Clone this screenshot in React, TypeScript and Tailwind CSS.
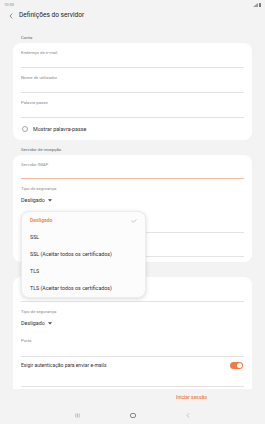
import React from 'react';

function Label({ children }: { children?: React.ReactNode }) {
  return <div className="h-[6px] leading-[6px] text-[4.3px] text-[#8a8a8a]">{children}</div>;
}

function Field({ label, accent = false, pt = 'pt-[7px]', gap = 'h-[11px]' }: { label?: string; accent?: boolean; pt?: string; gap?: string }) {
  return (
    <div className={`${pt} border-b ${accent ? 'border-[#f5b9a0]' : 'border-[#e3e3e3]'}`}>
      <Label>{label}</Label>
      <div className={gap} />
    </div>
  );
}

function Caret() {
  return (
    <svg width="4" height="3" viewBox="0 0 4 3" className="ml-[3px]">
      <path d="M0 0.3 L4 0.3 L2 2.6 Z" fill="#444" />
    </svg>
  );
}

function SecurityType({ pt = 'pt-[7px]' }: { pt?: string }) {
  return (
    <div className={pt}>
      <Label>Tipo de segurança</Label>
      <div className="mt-[4px] flex h-[8px] items-center text-[5.4px] text-[#333]">
        Desligado
        <Caret />
      </div>
    </div>
  );
}

function SectionTitle({ children, mt }: { children?: React.ReactNode; mt: string }) {
  return (
    <div className={`${mt} mb-[2px] h-[6px] px-[21px] leading-[6px] text-[4.3px] text-[#666]`}>{children}</div>
  );
}

const options = ['SSL', 'SSL (Aceitar todos os certificados)', 'TLS', 'TLS (Aceitar todos os certificados)'];

export default function App() {
  return (
    <div className="relative flex h-[424px] w-[265px] flex-col overflow-hidden bg-[#f3f3f3] font-['Roboto',sans-serif]">
      {/* status bar */}
      <div className="flex h-[9px] items-center justify-between px-[4px] text-[4px] text-[#8a8a8a]">
        <span>10:00</span>
        <div className="flex items-center gap-[1px]">
          <svg width="5" height="4" viewBox="0 0 5 4">
            <path d="M0 4 L5 0 L5 4 Z" fill="#9a9a9a" />
          </svg>
          <div className="h-[4px] w-[2.5px] rounded-[0.5px] bg-[#777]" />
        </div>
      </div>

      {/* header */}
      <div className="flex h-[14px] items-center pl-[9px] text-[6.6px] text-[#222]">
        <svg width="4" height="6" viewBox="0 0 4 6" className="mr-[6px]">
          <path d="M3.2 0.6 L0.9 3 L3.2 5.4" fill="none" stroke="#444" strokeWidth="0.6" />
        </svg>
        Definições do servidor
      </div>

      <div className="flex-1 overflow-hidden">
        <SectionTitle mt="mt-[12px]">Conta</SectionTitle>
        <div className="mx-[13px] rounded-[8px] bg-white px-[8px]">
          <Field label="Endereço de e-mail" />
          <Field label="Nome de utilizador" />
          <Field label="Palavra-passe" />
          <div className="flex h-[22px] items-center">
            <div className="ml-[1px] mr-[5px] h-[6px] w-[6px] rounded-full border-[0.6px] border-[#a8a8a8]" />
            <span className="text-[5.4px] text-[#333]">Mostrar palavra-passe</span>
          </div>
        </div>

        <SectionTitle mt="mt-[7px]">Servidor de recepção</SectionTitle>
        <div className="mx-[13px] rounded-[8px] bg-white px-[8px] pb-[5px]">
          <Field label="Servidor IMAP" accent gap="h-[10px]" />
          <SecurityType />
          {/* rows hidden under the open menu */}
          <Field pt="pt-[14px]" gap="h-[8px]" />
          <Field pt="pt-[13px]" gap="h-[4px]" />
        </div>

        <SectionTitle mt="mt-[7px]" />
        <div className="mx-[13px] rounded-t-[8px] bg-white px-[8px]">
          <Field />
          <SecurityType />
          <Field label="Porta" pt="pt-[11px]" gap="h-[12px]" />
          <div className="flex items-start justify-between border-b border-[#e3e3e3] pb-[17px] pt-[4px]">
            <span className="h-[8px] leading-[8px] text-[5px] text-[#333]">Exigir autenticação para enviar e-mails</span>
            <div className="mr-[1px] mt-[1px] flex h-[6.5px] w-[13px] items-center justify-end rounded-full bg-[#f07a45] pr-[0.8px]">
              <div className="h-[5px] w-[5px] rounded-full bg-white" />
            </div>
          </div>
          <div className="h-[6px]" />
        </div>
      </div>

      {/* bottom bar */}
      <div className="flex h-[35px] flex-col">
        <div className="flex h-[18px] items-center justify-end pr-[58px] text-[5px] font-medium text-[#f07a45]">
          Iniciar sessão
        </div>
        <div className="flex flex-1 items-center justify-center gap-[50px] pb-[1px] text-[#7a7a7a]">
          <svg width="5" height="5" viewBox="0 0 5 5">
            <path d="M0.8 0.5 V4.5 M2.5 0.5 V4.5 M4.2 0.5 V4.5" stroke="#888" strokeWidth="0.5" />
          </svg>
          <div className="h-[5px] w-[6px] rounded-[2px] border-[0.6px] border-[#888]" />
          <svg width="4" height="5" viewBox="0 0 4 5">
            <path d="M3 0.5 L1 2.5 L3 4.5" fill="none" stroke="#888" strokeWidth="0.5" />
          </svg>
        </div>
      </div>

      {/* dropdown menu */}
      <div className="absolute left-[21px] top-[211px] w-[125px] rounded-[8px] border border-[#ececec] bg-[#fcfcfc] shadow-[0_1px_4px_rgba(0,0,0,0.15)]">
        <div className="flex h-[17px] items-center justify-between px-[8px] text-[5px] font-bold text-[#f2875a]">
          Desligado
          <svg width="6" height="4" viewBox="0 0 6 4">
            <path d="M0.5 1.8 L2.2 3.4 L5.5 0.5" fill="none" stroke="#f2875a" strokeWidth="0.6" />
          </svg>
        </div>
        {options.map((o) => (
          <div key={o} className="flex h-[17px] items-center px-[8px] text-[5.3px] text-[#333]">
            {o}
          </div>
        ))}
      </div>
    </div>
  );
}
